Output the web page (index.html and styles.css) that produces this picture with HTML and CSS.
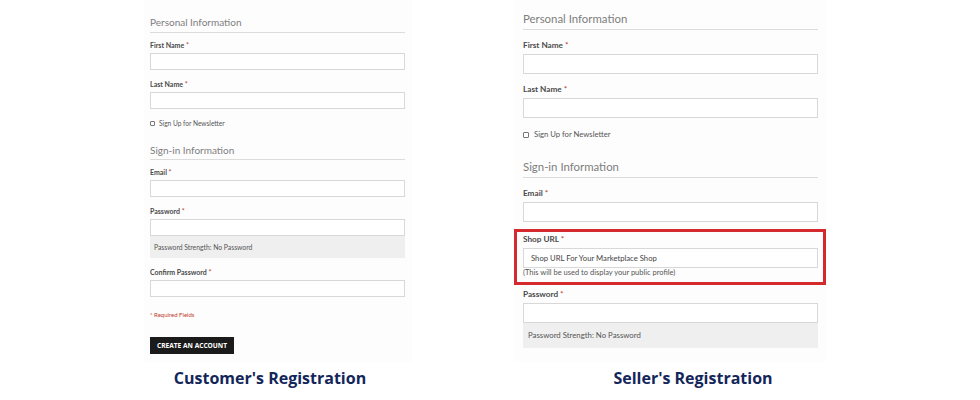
FILE: index.html
```html
<!DOCTYPE html>
<html>
<head>
<meta charset="utf-8">
<link rel="stylesheet" href="styles.css">
</head>
<body>
<div class="page">
  <div class="col col-left">
    <div class="panel sm">
      <div class="legend">Personal Information</div>
      <div class="field first">
        <div class="label">First Name <span class="req">*</span></div>
        <div class="input"></div>
      </div>
      <div class="field">
        <div class="label">Last Name <span class="req">*</span></div>
        <div class="input"></div>
      </div>
      <div class="check"><span class="box"></span>Sign Up for Newsletter</div>
      <div class="legend second">Sign-in Information</div>
      <div class="field first">
        <div class="label">Email <span class="req">*</span></div>
        <div class="input"></div>
      </div>
      <div class="field">
        <div class="label">Password <span class="req">*</span></div>
        <div class="input"></div>
        <div class="strength">Password Strength: No Password</div>
      </div>
      <div class="field">
        <div class="label">Confirm Password <span class="req">*</span></div>
        <div class="input"></div>
      </div>
      <div class="required">* Required Fields</div>
      <div class="button">CREATE AN ACCOUNT</div>
    </div>
    <div class="title">Customer's Registration</div>
  </div>
  <div class="col col-right">
    <div class="panel lg">
      <div class="legend">Personal Information</div>
      <div class="field first">
        <div class="label">First Name <span class="req">*</span></div>
        <div class="input"></div>
      </div>
      <div class="field">
        <div class="label">Last Name <span class="req">*</span></div>
        <div class="input"></div>
      </div>
      <div class="check"><span class="box"></span>Sign Up for Newsletter</div>
      <div class="legend second">Sign-in Information</div>
      <div class="field first">
        <div class="label">Email <span class="req">*</span></div>
        <div class="input"></div>
      </div>
      <div class="field highlight">
        <div class="label">Shop URL <span class="req">*</span></div>
        <div class="input placeholder">Shop URL For Your Marketplace Shop</div>
        <div class="note">(This will be used to display your public profile)</div>
      </div>
      <div class="field after-hl">
        <div class="label">Password <span class="req">*</span></div>
        <div class="input"></div>
        <div class="strength">Password Strength: No Password</div>
      </div>
    </div>
    <div class="title">Seller's Registration</div>
  </div>
</div>
</body>
</html>
```

FILE: styles.css
```css
* { box-sizing: border-box; }
html, body { margin: 0; padding: 0; background: #ffffff; }
body { width: 980px; height: 400px; overflow: hidden; font-family: Lato, "Noto Sans", sans-serif; }

.page { display: flex; padding-left: 144px; }
.col { display: flex; flex-direction: column; }
.col-left { width: 268px; }
.col-right { width: 312px; margin-left: 102px; }

.panel { background: #fdfdfd; }
.sm { height: 362px; padding: 15px 7px 0 6px; display: flex; flex-direction: column; }
.lg { height: 362px; padding: 11px 8px 0 9px; }

.legend { color: #7d7d7d; font-weight: 400; border-bottom: 1px solid #dcdcdc; }
.sm .legend { font-size: 10px; line-height: 14px; padding-bottom: 3px; }
.lg .legend { font-size: 11.4px; line-height: 15px; padding-bottom: 3px; }
.sm .legend.second { margin-top: 15px; padding-bottom: 2px; }
.lg .legend.second { margin-top: 19px; }

.label { color: #4a4a4a; font-weight: 700; }
.req { color: #c0392b; font-weight: 400; }
.sm .label { font-size: 7px; line-height: 10px; margin-bottom: 3px; }
.lg .label { font-size: 8.2px; line-height: 11px; margin-bottom: 3px; }

.sm .field { margin-top: 9px; }
.sm .field.first { margin-top: 7px; }
.lg .field { margin-top: 10px; }
.lg .field.first { margin-top: 10px; }

.input { background: #ffffff; border: 1px solid #d8d8d8; }
.sm .input { height: 17px; }
.lg .input { height: 20px; }
.placeholder { color: #444; font-size: 7.7px; line-height: 18px; padding-left: 7px; }

.strength { background: #efefef; color: #555; }
.sm .strength { height: 22px; font-size: 6.8px; line-height: 22px; padding-left: 4px; }
.lg .strength { height: 25px; font-size: 7.8px; line-height: 25px; padding-left: 5px; }

.check { display: flex; align-items: center; color: #555; }
.sm .check { font-size: 6.6px; line-height: 10px; margin-top: 9px; }
.lg .check { font-size: 7.7px; line-height: 11px; margin-top: 11px; }
.box { display: inline-block; border: 1px solid #777; border-radius: 1px; background: #fff; }
.sm .box { width: 5px; height: 5px; margin-right: 4px; }
.lg .box { width: 6px; height: 6px; margin-right: 5px; }

.required { color: #c0392b; font-size: 6px; line-height: 10px; margin-top: 13px; }
.button { display: inline-flex; align-self: flex-start; width: 84px; height: 17px; margin-top: 17px; background: #1b1b1b; color: #fff; font-family: "Open Sans", sans-serif; font-weight: 700; font-size: 6.6px; align-items: center; justify-content: center; }

.highlight { border: 3px solid #d42a2e; margin: 7px -8px 0 -9px; padding: 2px 5px 4px 6px; }
.lg .highlight { margin-top: 7px; }
.note { color: #555; font-size: 7.5px; line-height: 10px; }
.lg .after-hl { margin-top: 4px; }

.title { font-family: "Open Sans", sans-serif; font-weight: 700; font-size: 16px; color: #13265a; text-align: center; line-height: 22px; margin-top: 5px; }
.col-left .title { margin-left: -16px; }
.col-right .title { margin-left: 23px; margin-right: -23px; }
```
